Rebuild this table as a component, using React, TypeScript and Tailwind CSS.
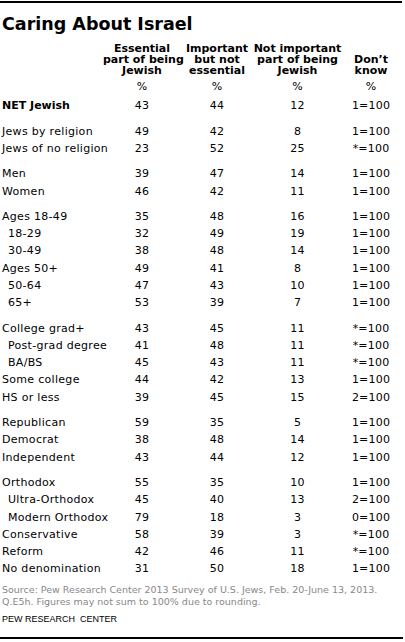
import React from 'react';

type Row = { label: string; v: [string, string, string, string]; sub?: boolean; bold?: boolean };

const groups: Row[][] = [
  [
    { label: 'Jews by religion', v: ['49', '42', '8', '1=100'] },
    { label: 'Jews of no religion', v: ['23', '52', '25', '*=100'] },
  ],
  [
    { label: 'Men', v: ['39', '47', '14', '1=100'] },
    { label: 'Women', v: ['46', '42', '11', '1=100'] },
  ],
  [
    { label: 'Ages 18-49', v: ['35', '48', '16', '1=100'] },
    { label: '18-29', v: ['32', '49', '19', '1=100'], sub: true },
    { label: '30-49', v: ['38', '48', '14', '1=100'], sub: true },
    { label: 'Ages 50+', v: ['49', '41', '8', '1=100'] },
    { label: '50-64', v: ['47', '43', '10', '1=100'], sub: true },
    { label: '65+', v: ['53', '39', '7', '1=100'], sub: true },
  ],
  [
    { label: 'College grad+', v: ['43', '45', '11', '*=100'] },
    { label: 'Post-grad degree', v: ['41', '48', '11', '*=100'], sub: true },
    { label: 'BA/BS', v: ['45', '43', '11', '*=100'], sub: true },
    { label: 'Some college', v: ['44', '42', '13', '1=100'] },
    { label: 'HS or less', v: ['39', '45', '15', '2=100'] },
  ],
  [
    { label: 'Republican', v: ['59', '35', '5', '1=100'] },
    { label: 'Democrat', v: ['38', '48', '14', '1=100'] },
    { label: 'Independent', v: ['43', '44', '12', '1=100'] },
  ],
  [
    { label: 'Orthodox', v: ['55', '35', '10', '1=100'] },
    { label: 'Ultra-Orthodox', v: ['45', '40', '13', '2=100'], sub: true },
    { label: 'Modern Orthodox', v: ['79', '18', '3', '0=100'], sub: true },
    { label: 'Conservative', v: ['58', '39', '3', '*=100'] },
    { label: 'Reform', v: ['42', '46', '11', '*=100'] },
    { label: 'No denomination', v: ['31', '50', '18', '1=100'] },
  ],
];

const cols = 'grid grid-cols-[101px_78px_72px_89px_58px]';

function DataRow({ row }: { row: Row }) {
  return (
    <div className={`${cols} h-[17.3px] items-center leading-[17.3px]`}>
      <div className={`${row.sub ? 'pl-[6px]' : ''} ${row.bold ? 'font-bold' : 'tracking-[0.3px]'} whitespace-nowrap`}>{row.label}</div>
      {row.v.map((x, i) => (
        <div key={i} className="text-center tracking-[0.2px]">{x}</div>
      ))}
    </div>
  );
}

export default function App() {
  return (
    <div className="w-[405px] h-[642px] bg-white text-black font-['DejaVu_Sans',Verdana,sans-serif] text-[11px] overflow-hidden">
      <div className="mt-[1px] mr-[3px] h-[2px] bg-black" />

      <div className="pl-[2px]">
        {/* Title */}
        <h1 className="mt-[11px] text-[17.5px] leading-[20px] font-bold">Caring About Israel</h1>

        {/* Column headers */}
        <div className={`${cols} mt-[8.7px] items-end font-bold leading-[11px] whitespace-nowrap`}>
          <div />
          <div className="text-center">Essential<br />part of being<br />Jewish</div>
          <div className="text-center">Important<br />but not<br />essential</div>
          <div className="text-center">Not important<br />part of being<br />Jewish</div>
          <div className="text-center">Don’t<br />know</div>
        </div>

        <div className={`${cols} mt-[2.65px] h-[17.3px] items-center`}>
          <div />
          <div className="text-center">%</div>
          <div className="text-center">%</div>
          <div className="text-center">%</div>
          <div className="text-center">%</div>
        </div>

        <div className="mt-[1.7px]">
          <DataRow row={{ label: 'NET Jewish', v: ['43', '44', '12', '1=100'], bold: true }} />
        </div>

        {groups.map((g, gi) => (
          <div key={gi} className="mt-[8px]">
            {g.map((r) => (
              <DataRow key={r.label} row={r} />
            ))}
          </div>
        ))}

        {/* Footnote */}
        <p className="mt-[6.6px] text-[9.5px] leading-[11.5px] text-[#888888] whitespace-nowrap">
          Source: Pew Research Center 2013 Survey of U.S. Jews, Feb. 20-June 13, 2013.
          <br />
          Q.E5h. Figures may not sum to 100% due to rounding.
        </p>
        <p className="mt-[5.5px] text-[9px] leading-[12px] whitespace-pre font-['Liberation_Sans',Arial,sans-serif]">PEW RESEARCH  CENTER</p>
      </div>

      <div className="mt-[12px] mr-[2px] h-[2px] bg-black" />
    </div>
  );
}
